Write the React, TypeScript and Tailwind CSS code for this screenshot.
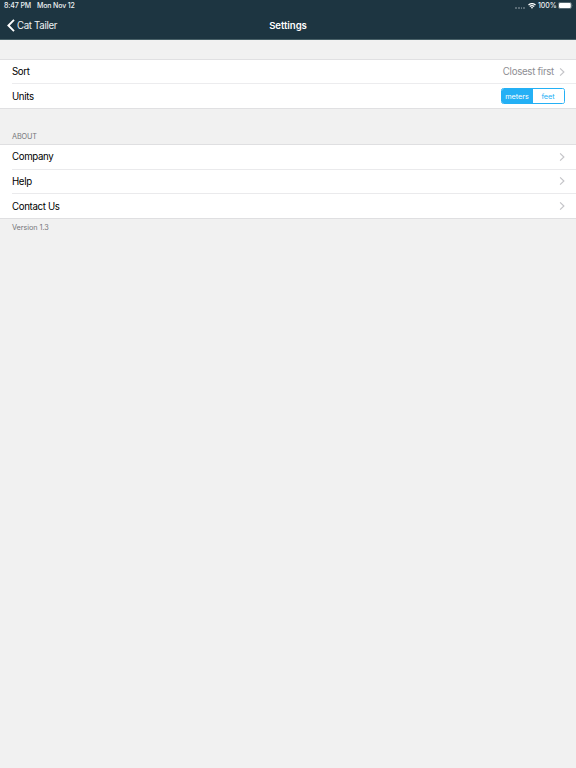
import React, { useState } from 'react';

const aboutRows = ['Company', 'Help', 'Contact Us'];

function Chevron() {
  return (
    <svg className="w-[6px] h-[8px] shrink-0" viewBox="0 0 6 8" fill="none">
      <path d="M1.1 0.4 L4.9 4 L1.1 7.6" stroke="#c4c4c8" strokeWidth="1.15" />
    </svg>
  );
}

function StatusBar() {
  return (
    <div className="h-[12px] flex items-center pl-1 pr-[3px] text-[7px] leading-[12px] font-medium text-[#eef2f4]">
      <span className="w-[33px] whitespace-nowrap tracking-[-0.12px]">8:47 PM</span>
      <span className="whitespace-nowrap tracking-[-0.15px]">Mon Nov 12</span>
      <div className="ml-auto flex items-center">
        <div className="flex gap-[1px] mt-[4px] mr-[2.5px]">
          {[0, 1, 2, 3].map((dot) => (
            <span key={dot} className="w-[1.75px] h-[1.5px] rounded-full bg-[#6d7d86]" />
          ))}
        </div>
        <svg className="w-[8px] h-[6px] mr-[2.5px]" viewBox="0 0 16 12" fill="none" stroke="#fff">
          <path d="M1 4.2 Q8 -1.8 15 4.2" strokeWidth="2.6" />
          <path d="M3.5 7 Q8 3.2 12.5 7" strokeWidth="2.4" />
          <path d="M5.6 8.8 Q8 6.8 10.4 8.8 L8 11.5 Z" fill="#fff" stroke="none" />
        </svg>
        <span className="mr-[2px] w-[18px] whitespace-nowrap tracking-[-0.1px]">100%</span>
        <svg className="w-[15px] h-[7px] mb-[1px]" viewBox="0 0 15 7">
          <rect x="0.4" y="0.4" width="13" height="6.2" rx="1.6" fill="none" stroke="#8b989f" strokeWidth="0.6" />
          <rect x="1" y="1" width="11.8" height="5" rx="1" fill="#fff" />
          <path d="M14 2.4 Q14.8 3.5 14 4.6 Z" fill="#8b989f" />
        </svg>
      </div>
    </div>
  );
}

function App() {
  const [units, setUnits] = useState('meters');

  return (
    <div className="min-h-screen bg-[#f1f1f1] font-['Inter','Liberation_Sans',sans-serif] text-[9.7px] tracking-[-0.35px] text-black">
      <header className="h-[40px] bg-[#1d3541] border-b border-[#496168] text-white">
        <StatusBar />
        <div className="h-[27px] grid grid-cols-3 items-center">
          <button className="flex items-center pl-[7px] text-[#eef2f4]">
            <svg className="w-[8px] h-[13px] mr-[2px]" viewBox="0 0 8 13" fill="none">
              <path d="M7 0.9 L1.4 6.5 L7 12.1" stroke="#fff" strokeWidth="1.9" />
            </svg>
            <span className="pt-[1px] tracking-[-0.33px]">Cat Tailer</span>
          </button>
          <h1 className="pt-[1.5px] text-center text-[9.6px] font-semibold tracking-[-0.05px]">Settings</h1>
        </div>
      </header>

      <section className="mt-[19px] bg-white border-y border-[#e0e0e2]">
        <div className="h-[24px] ml-[12px] pr-[11px] flex items-center border-b border-[#ececee]">
          <span className="pt-[1.5px]">Sort</span>
          <span className="pt-[1.5px] ml-auto mr-[5px] text-[#8e8e93] tracking-[-0.28px]">Closest first</span>
          <Chevron />
        </div>
        <div className="h-[24px] ml-[12px] pr-[11px] flex items-center">
          <span className="pt-[2px]">Units</span>
          <div className="ml-auto w-[64px] h-[16px] flex rounded-[2.5px] border border-[#24b0f5] overflow-hidden text-[7.3px] tracking-[-0.05px]">
            {['meters', 'feet'].map((unit) => (
              <button
                key={unit}
                onClick={() => setUnits(unit)}
                className={`flex-1 pt-[1px] pr-[1px] leading-[14px] ${units === unit ? 'bg-[#24b0f5] text-white' : 'bg-white text-[#24b0f5]'}`}
              >
                {unit}
              </button>
            ))}
          </div>
        </div>
      </section>

      <h2 className="mt-[22px] h-[13px] pl-[12px] text-[7.3px] leading-[11px] tracking-[-0.12px] text-[#77777b]">ABOUT</h2>
      <section className="bg-white border-y border-[#dfdfe1]">
        {aboutRows.map((row) => (
          <div
            key={row}
            className="h-[24.67px] ml-[12px] pr-[11px] flex items-center border-b border-[#eaeaec] last:border-b-0 last:h-[24px]"
          >
            <span className="pt-[1px]">{row}</span>
            <span className="ml-auto"><Chevron /></span>
          </div>
        ))}
      </section>
      <p className="pl-[12px] pt-[3px] text-[7.3px] leading-[11px] tracking-[-0.06px] text-[#77777b]">Version 1.3</p>
    </div>
  );
}

export default App;
